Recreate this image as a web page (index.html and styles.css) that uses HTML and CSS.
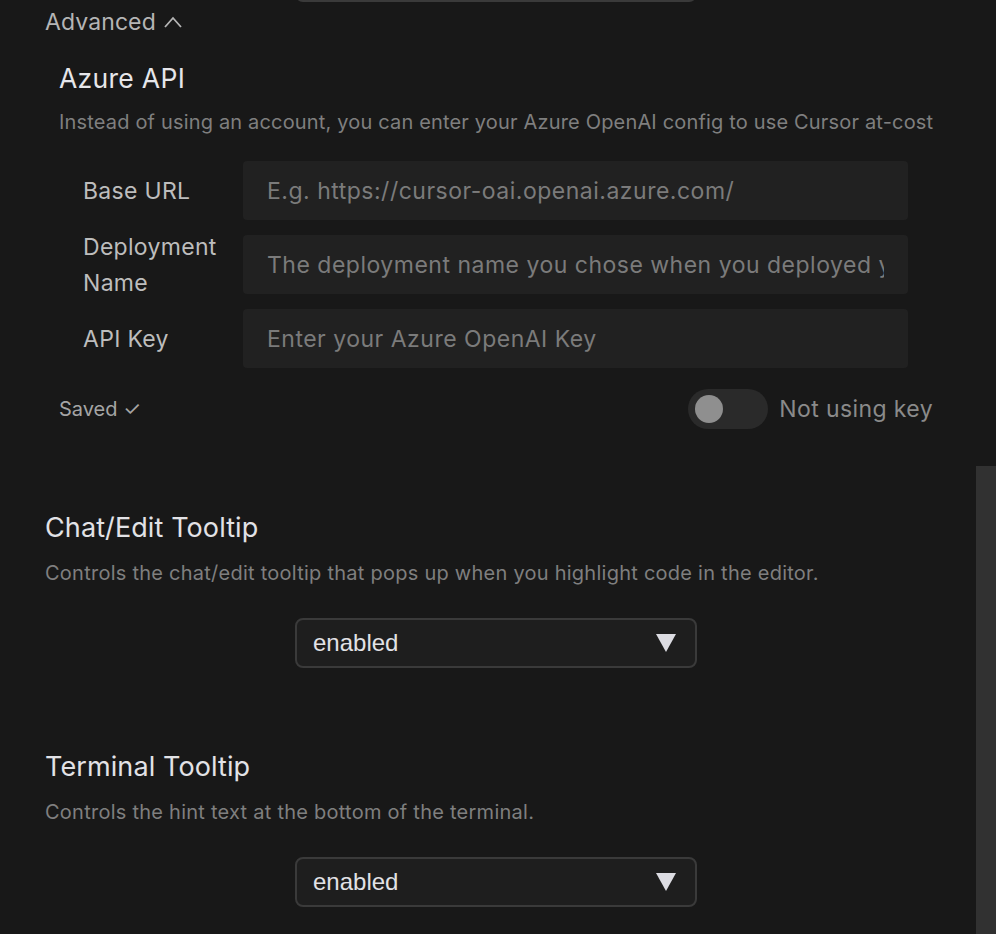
FILE: index.html
```html
<!DOCTYPE html>
<html lang="en">
<head>
    <meta charset="UTF-8">
    <meta name="viewport" content="width=device-width, initial-scale=1.0">
    <title>Settings</title>
    <link rel="stylesheet" href="styles.css">
</head>
<body>
    <div class="settings">
        <!-- select cut off above the fold -->
        <div class="select select-top"></div>

        <div class="advanced">
            Advanced
            <svg class="chevron" width="20" height="14" viewBox="0 0 20 14"><polyline points="2,12 10,3 18,12" fill="none" stroke="#b5b5b5" stroke-width="1.8"/></svg>
        </div>

        <!-- Azure API -->
        <div class="azure">
            <h2>Azure API</h2>
            <p class="desc">Instead of using an account, you can enter your Azure OpenAI config to use Cursor at-cost</p>

            <div class="form">
                <label for="baseUrl">Base URL</label>
                <input type="text" id="baseUrl" placeholder="E.g. https://cursor-oai.openai.azure.com/">
                <label for="deployment">Deployment Name</label>
                <input type="text" id="deployment" placeholder="The deployment name you chose when you deployed your model">
                <label for="apiKey">API Key</label>
                <input type="text" id="apiKey" placeholder="Enter your Azure OpenAI Key">
            </div>

            <div class="status-row">
                <span class="saved">Saved ✓</span>
                <div class="key-toggle">
                    <div class="toggle"><div class="knob"></div></div>
                    <span>Not using key</span>
                </div>
            </div>
        </div>

        <!-- Chat/Edit Tooltip -->
        <div class="section">
            <h3>Chat/Edit Tooltip</h3>
            <p class="desc">Controls the chat/edit tooltip that pops up when you highlight code in the editor.</p>
            <div class="select"><span>enabled</span>
                <svg width="20" height="20" viewBox="0 0 20 20"><polygon points="0,1 20,1 10,19" fill="#dcdce2"/></svg>
            </div>
        </div>

        <!-- Terminal Tooltip -->
        <div class="section">
            <h3>Terminal Tooltip</h3>
            <p class="desc">Controls the hint text at the bottom of the terminal.</p>
            <div class="select"><span>enabled</span>
                <svg width="20" height="20" viewBox="0 0 20 20"><polygon points="0,1 20,1 10,19" fill="#dcdce2"/></svg>
            </div>
        </div>
    </div>

    <div class="scrollbar"></div>
</body>
</html>
```

FILE: styles.css
```css
/* Page */
body {
    margin: 0;
    background-color: #181818;
    font-family: Inter, "Noto Sans", sans-serif;
    color: #e2e2e6;
    overflow: hidden;
    height: 934px;
}

.settings {
    width: 902px;
    padding-left: 45px;
}

/* Headings and descriptions */
h2, h3, p {
    margin: 0;
    font-weight: 400;
}

.desc {
    margin-top: 15px;
    font-size: 20px;
    letter-spacing: 0.25px;
    line-height: 26px;
    color: #7f7f7f;
    white-space: nowrap;
}

/* Select boxes */
.select {
    height: 46px;
    width: 363px;
    margin: 32px auto 0;
    border: 2px solid #3a3a3a;
    border-radius: 8px;
    background-color: #1e1e1e;
    display: flex;
    align-items: center;
    justify-content: space-between;
    padding: 0 19px 0 16px;
    box-sizing: content-box;
    font-family: "Liberation Sans", Arial, sans-serif;
    font-size: 24px;
    color: #e2e2e6;
}

.select-top {
    margin-top: -48px;
}

/* Advanced toggle */
.advanced {
    margin-top: 5px;
    font-size: 23px;
    letter-spacing: 0.1px;
    line-height: 30px;
    color: #b5b5b5;
    display: flex;
    align-items: center;
    gap: 7px;
}

/* Azure block */
.azure {
    padding-left: 14px;
}

.azure h2 {
    margin-top: 25px;
    font-size: 26.5px;
    letter-spacing: 0.3px;
    line-height: 32px;
    color: #e6e6ea;
}

.azure .desc {
    letter-spacing: 0.17px;
}

.form {
    margin-top: 26px;
    padding-left: 24px;
    display: grid;
    grid-template-columns: 160px 665px;
    grid-auto-rows: 59px;
    row-gap: 15px;
    align-items: center;
}

.form label {
    font-size: 23px;
    letter-spacing: 0.3px;
    line-height: 36px;
    color: #bdbdbd;
    padding-right: 10px;
}

.form input {
    height: 59px;
    box-sizing: border-box;
    border: none;
    border-radius: 4px;
    background-color: #212121;
    padding: 0 24px;
    font-family: inherit;
    font-size: 23px;
    letter-spacing: 0.5px;
    color: #ddd;
    outline: none;
}

.form input::placeholder {
    color: #7b7b7b;
}

.status-row {
    margin-top: 21px;
    width: 874px;
    display: flex;
    justify-content: space-between;
    align-items: center;
}

.saved {
    font-size: 20px;
    color: #a5a5a5;
}

.key-toggle {
    display: flex;
    align-items: center;
    gap: 11px;
    font-size: 23px;
    letter-spacing: 0.4px;
    color: #8a8a8a;
}

.toggle {
    width: 80px;
    height: 40px;
    border-radius: 20px;
    background-color: #2a2a2a;
    display: flex;
    align-items: center;
    padding-left: 7px;
    box-sizing: border-box;
}

.knob {
    width: 28px;
    height: 28px;
    border-radius: 50%;
    background-color: #8f8f8f;
}

/* Tooltip sections */
.section h3 {
    margin-top: 82px;
    font-size: 27px;
    letter-spacing: 0.1px;
    line-height: 34px;
    color: #e2e2e6;
}

/* Scrollbar overlay */
.scrollbar {
    position: absolute;
    right: 0;
    top: 466px;
    width: 20px;
    height: 468px;
    background-color: #313131;
}
```
